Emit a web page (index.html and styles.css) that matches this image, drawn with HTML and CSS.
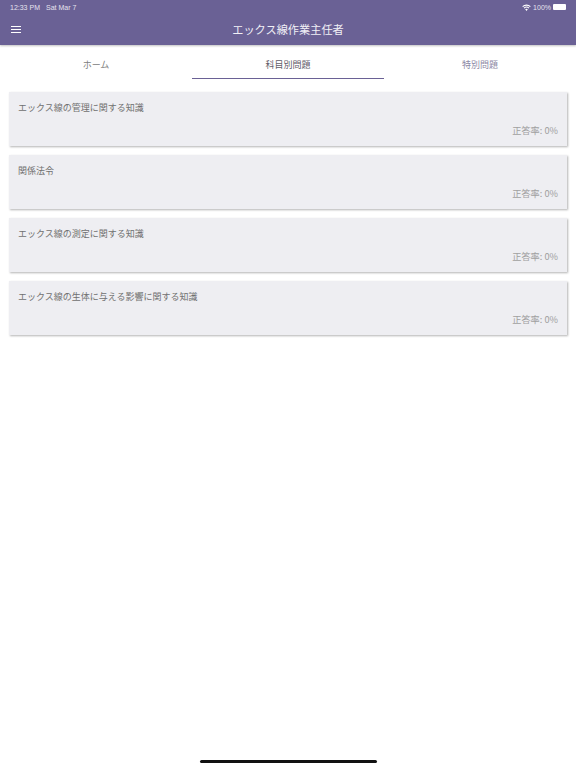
FILE: index.html
```html
<!DOCTYPE html>
<html lang="ja">
<head>
    <meta charset="UTF-8">
    <meta name="viewport" content="width=device-width, initial-scale=1.0">
    <title>エックス線作業主任者</title>
    <link rel="stylesheet" href="styles.css">
</head>
<body>
    <div class="app">
        <header class="header">
            <div class="status-bar">
                <div class="status-left">
                    <span>12:33 PM</span>
                    <span>Sat Mar 7</span>
                </div>
                <div class="status-right">
                    <svg class="wifi" viewBox="0 0 16 12" width="9" height="7">
                        <path d="M8 12 5.6 9.2a3.4 3.4 0 0 1 4.8 0zM4.4 7.9 3 6.4a7 7 0 0 1 10 0l-1.4 1.5a5 5 0 0 0-7.2 0zM1.9 5.2.4 3.6a10.8 10.8 0 0 1 15.2 0l-1.5 1.6a8.7 8.7 0 0 0-12.2 0z" fill="#fff"/>
                    </svg>
                    <span>100%</span>
                    <span class="battery"></span>
                </div>
            </div>
            <div class="nav-bar">
                <button class="menu-button" aria-label="menu">
                    <span></span>
                    <span></span>
                    <span></span>
                </button>
                <h1 class="title">エックス線作業主任者</h1>
            </div>
        </header>

        <nav class="tabs">
            <div class="tab">ホーム</div>
            <div class="tab active">科目別問題</div>
            <div class="tab muted">特別問題</div>
        </nav>

        <main class="cards">
            <div class="card">
                <div class="card-title">エックス線の管理に関する知識</div>
                <div class="card-score">正答率: 0%</div>
            </div>
            <div class="card">
                <div class="card-title">関係法令</div>
                <div class="card-score">正答率: 0%</div>
            </div>
            <div class="card">
                <div class="card-title">エックス線の測定に関する知識</div>
                <div class="card-score">正答率: 0%</div>
            </div>
            <div class="card">
                <div class="card-title">エックス線の生体に与える影響に関する知識</div>
                <div class="card-score">正答率: 0%</div>
            </div>
        </main>

        <div class="home-indicator"></div>
    </div>
</body>
</html>
```

FILE: styles.css
```css
* {
    box-sizing: border-box;
}

body {
    margin: 0;
    background-color: #fff;
    font-family: "Noto Sans CJK JP", "Liberation Sans", sans-serif;
}

.app {
    display: flex;
    flex-direction: column;
    height: 768px;
    overflow: hidden;
}

.header {
    height: 45px;
    background-color: #6a6195;
    color: #fff;
    box-shadow: 0 1px 2px rgba(0, 0, 0, 0.25);
}

.status-bar {
    display: flex;
    justify-content: space-between;
    align-items: center;
    height: 14px;
    padding: 0 10px;
    font-family: "Liberation Sans", sans-serif;
    font-size: 7px;
    color: #e6e3ef;
}

.status-left {
    display: flex;
    gap: 6px;
}

.status-right {
    display: flex;
    align-items: center;
    gap: 2px;
}

.battery {
    width: 13px;
    height: 6px;
    border-radius: 1px;
    background-color: #fff;
}

.nav-bar {
    display: flex;
    align-items: center;
    justify-content: center;
    position: relative;
    height: 30px;
}

.menu-button {
    position: absolute;
    left: 11px;
    top: 12px;
    display: flex;
    flex-direction: column;
    gap: 2px;
    width: 10px;
    padding: 0;
    border: none;
    background: none;
}

.menu-button span {
    height: 1px;
    background-color: #fff;
}

.title {
    margin: 0;
    font-size: 11.2px;
    font-weight: 400;
    color: #f1f0f6;
}

.tabs {
    display: grid;
    grid-template-columns: repeat(3, 1fr);
    height: 34px;
}

.tab {
    display: flex;
    align-items: center;
    justify-content: center;
    padding-top: 5px;
    font-size: 9px;
    color: #808080;
}

.tab.active {
    border-bottom: 1px solid #6a6195;
    color: #5f5b68;
}

.tab.muted {
    color: #8d88a5;
}

.cards {
    display: flex;
    flex-direction: column;
    gap: 9px;
    padding: 13px 9px 0 9px;
}

.card {
    display: flex;
    flex-direction: column;
    justify-content: space-between;
    height: 54px;
    padding: 9px 9px 9px 9px;
    background-color: #eeeef2;
    box-shadow: 1px 1px 2px rgba(0, 0, 0, 0.3);
}

.card-title {
    font-size: 9px;
    line-height: 13px;
    color: #707070;
}

.card-score {
    font-size: 9.2px;
    line-height: 13px;
    text-align: right;
    color: #a0a0a0;
}

.home-indicator {
    position: absolute;
    left: 200px;
    top: 760px;
    width: 177px;
    height: 3px;
    border-radius: 2px;
    background-color: #111;
}
```
